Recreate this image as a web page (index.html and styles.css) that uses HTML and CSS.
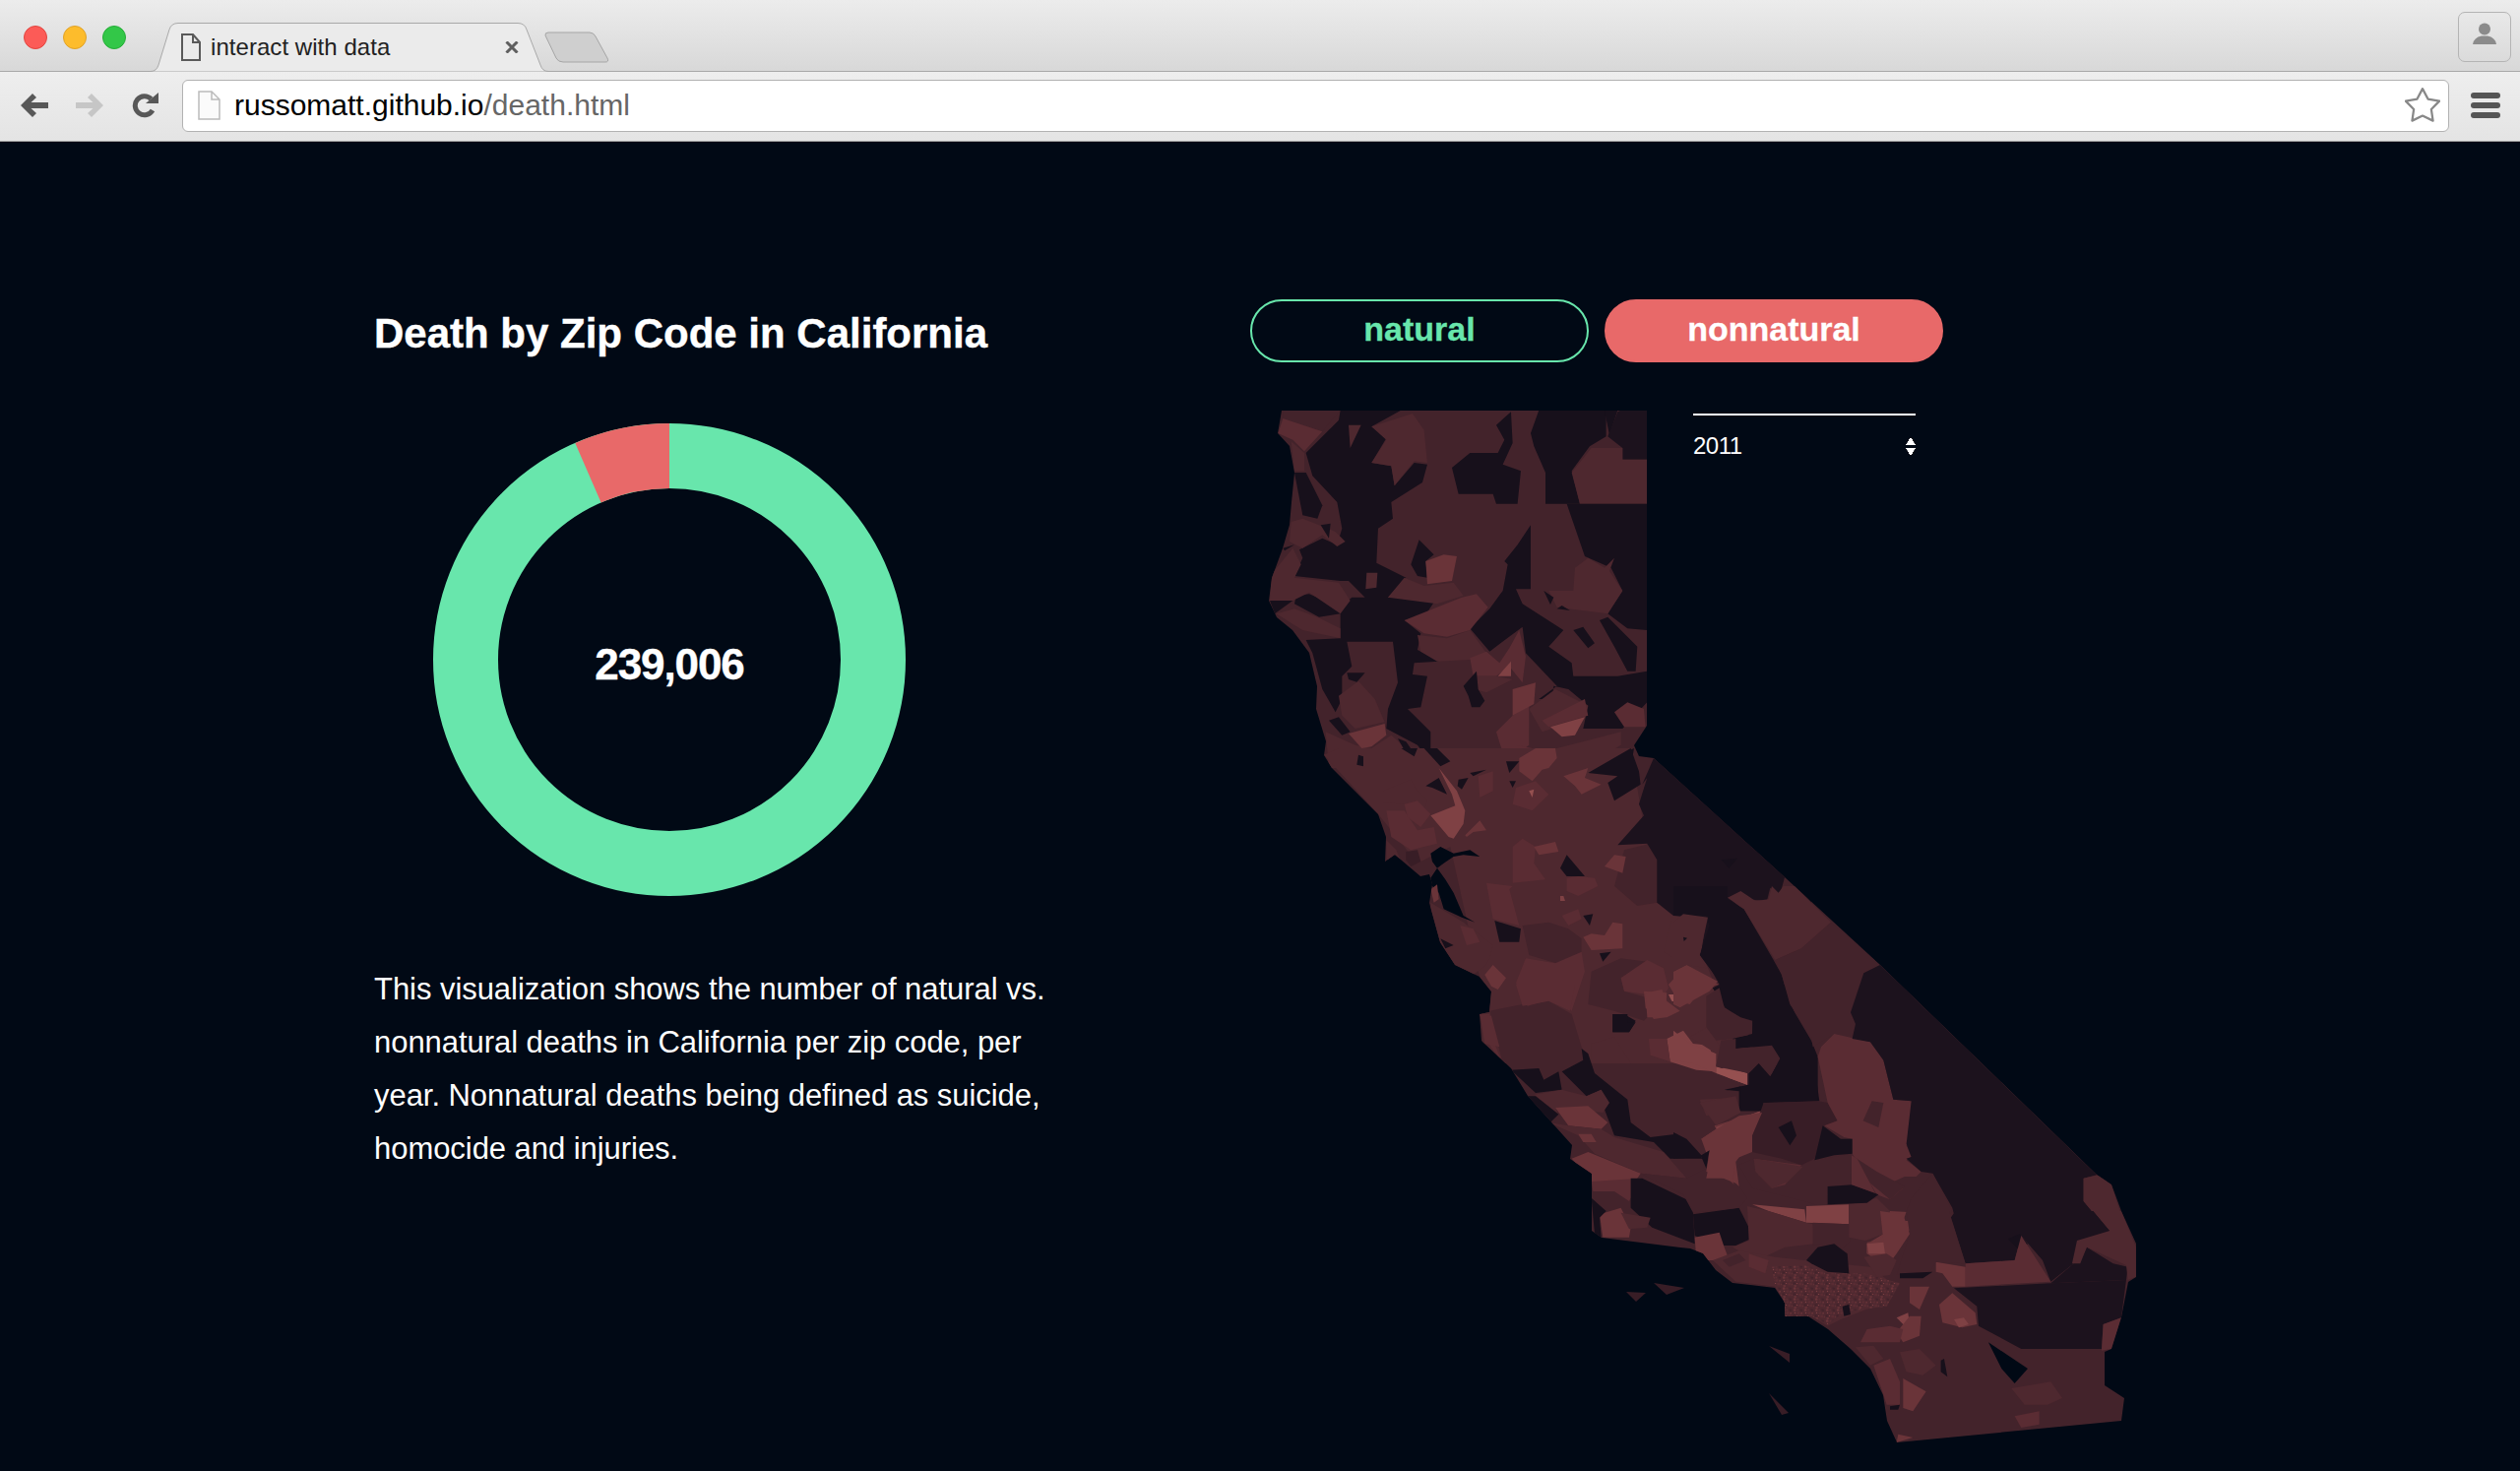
FILE: index.html
```html
<!DOCTYPE html>
<html lang="en">
  <head>
    <meta charset="UTF-8" />
    <meta name="viewport" content="width=device-width, initial-scale=1.0" />
    <title>interact with data</title>
    <link rel="stylesheet" href="styles.css">
  </head>
  <body>
    <header class="browser">
      <div class="tabstrip">
        <div class="lights">
          <span class="light red"></span>
          <span class="light yellow"></span>
          <span class="light green"></span>
        </div>
        <div class="tab">
          <svg class="tab-shape" viewBox="0 0 410 50" width="410" height="50">
            <path d="M0 49.5 H3 Q9 49.5 11 43 L22 7 Q24 0.5 31 0.5 H376 Q383 0.5 385 7 L399 43 Q401 49.5 407 49.5 H410 V50 H0 Z" />
          </svg>
          <svg class="doc-icon" viewBox="0 0 20 28" width="20" height="28">
            <path d="M1 1 H12 L19 9 V27 H1 Z M12 1 V9 H19" />
          </svg>
          <span class="tab-title">interact with data</span>
          <svg class="tab-close" viewBox="0 0 14 12" width="14" height="12">
            <path d="M1.5 0.5 L12.5 11.5 M12.5 0.5 L1.5 11.5" />
          </svg>
        </div>
        <svg class="new-tab" viewBox="0 0 66 32" width="66" height="32">
          <path d="M1 4 Q0.5 1 4 1 H46 Q50 1 52 5 L64 27 Q66 31 62 31 H19 Q14 31 12 27 Z" />
        </svg>
        <div class="profile">
          <svg viewBox="0 0 24 24" width="24" height="24">
            <circle cx="12" cy="6.5" r="6" />
            <path d="M0 22 Q1 15 9 13.5 H15 Q23 15 24 22 Z" />
          </svg>
        </div>
      </div>
      <div class="toolbar">
        <svg class="nav-back" viewBox="0 0 30 26" width="30" height="26">
          <path d="M13 1 L1 13 L13 25 L17 21 L11.5 16 H29 V10 H11.5 L17 5 Z" />
        </svg>
        <svg class="nav-forward" viewBox="0 0 30 26" width="30" height="26">
          <path d="M17 1 L29 13 L17 25 L13 21 L18.5 16 H1 V10 H18.5 L13 5 Z" />
        </svg>
        <svg class="nav-reload" viewBox="0 0 27 26" width="27" height="26">
          <path class="reload-arc" d="M21 18 A9.5 9.5 0 1 1 19.5 6.5" />
          <path class="reload-head" d="M14 11 H27 V0 Z" />
        </svg>
        <div class="omnibox">
          <svg class="page-icon" viewBox="0 0 23 30" width="23" height="30">
            <path d="M1 1 H14 L22 9 V29 H1 Z M14 1 V9 H22" />
          </svg>
          <span class="url">russomatt.github.io<span class="url-path">/death.html</span></span>
          <svg class="star" viewBox="2 1 32 32" width="36" height="36">
            <polygon points="18,2 22.9,11.3 33.2,13.1 25.9,20.6 27.4,30.9 18,26.4 8.6,30.9 10.1,20.6 2.8,13.1 13.1,11.3" />
          </svg>
        </div>
        <div class="menu">
          <span></span>
          <span></span>
          <span></span>
        </div>
      </div>
    </header>

    <main class="page">
      <section class="intro">
        <h1>Death by Zip Code in California</h1>
        <div class="ring">
          <svg viewBox="-240 -240 480 480" width="480" height="480">
            <circle class="ring-green" cx="0" cy="0" r="207" />
            <path class="ring-red" d="M0 -240 A240 240 0 0 0 -95.7 -220.1 L-69.4 -159.6 A174 174 0 0 1 0 -174 Z" />
          </svg>
          <span class="ring-total">239,006</span>
        </div>
        <p class="blurb">This visualization shows the number of natural vs.<br>nonnatural deaths in California per zip code, per<br>year. Nonnatural deaths being defined as suicide,<br>homocide and injuries.</p>
      </section>

      <section class="explore">
        <div class="toggles">
          <button class="toggle toggle-natural" type="button">natural</button>
          <button class="toggle toggle-nonnatural" type="button">nonnatural</button>
        </div>
        <div class="map-wrap">
          <svg class="map" viewBox="1280 410 900 1070" width="900" height="1070">
            <defs>
              <clipPath id="state">
                <polygon points="1302,417 1673,417 1673,737 1660,757 1665,768 1680,770 1823,900 1910,980 2130,1193 2145,1203 2155,1230 2170,1263 2170,1297 2162,1302 2155,1338 2145,1370 2138,1373 2138,1407 2158,1420 2155,1443 1927,1465 1917,1443 1913,1417 1900,1390 1880,1370 1857,1350 1837,1337 1813,1337 1813,1323 1803,1308 1760,1303 1743,1290 1730,1273 1717,1268 1707,1267 1627,1257 1617,1250 1617,1192 1595,1177 1597,1163 1552,1113 1535,1085 1505,1057 1503,1030 1513,1028 1515,1007 1503,992 1478,980 1463,957 1452,917 1455,898 1452,888 1443,890 1417,868 1407,875 1408,850 1400,827 1353,780 1345,767 1347,753 1337,720 1338,697 1330,663 1313,640 1297,627 1289,610 1292,587 1303,557 1310,533 1312,510 1315,480 1310,453 1298,440" />
              </clipPath>
              <pattern id="speck" width="60" height="60" patternUnits="userSpaceOnUse" patternTransform="scale(.55)">
                <rect class="c3" width="60" height="60" />
                <polygon class="c5" points="4,4 16,2 20,12 8,16" />
                <polygon class="c4" points="24,6 32,4 34,12 26,14" />
                <polygon class="c2" points="40,2 56,6 52,16 42,14" />
                <polygon class="c6" points="10,22 16,20 18,26 12,28" />
                <polygon class="c4" points="24,20 38,18 40,30 26,32" />
                <polygon class="c5" points="46,22 54,22 54,30 46,32" />
                <polygon class="c2" points="2,36 14,34 16,46 4,46" />
                <polygon class="c6" points="22,38 28,38 28,44 22,44" />
                <polygon class="c4" points="34,38 48,36 50,50 36,50" />
                <polygon class="c5" points="8,50 20,50 22,58 10,58" />
                <polygon class="c5" points="54,42 58,42 58,50 54,50" />
              </pattern>
            </defs>

            <g clip-path="url(#state)">
              <rect class="c2" x="1280" y="410" width="900" height="1070" />

              <!-- north -->
              <g transform="translate(1280 410) scale(.3333)">
                <polygon class="d" points="245,20 430,20 340,70 385,105 340,180 400,190 410,250 470,180 510,185 495,240 400,300 405,350 360,380 355,485 445,530 390,590 540,590 500,650 440,660 490,700 480,750 545,785 470,790 465,825 510,830 490,925 450,930 520,1000 520,1050 580,1090 540,1105 495,1060 480,1040 385,990 390,930 420,850 405,725 265,725 280,800 250,830 250,900 230,940 190,870 160,760 140,720 245,715 245,640 180,650 105,610 110,585 150,580 245,620 280,590 320,590 270,540 245,540 105,525 130,470 120,445 190,410 235,430 250,380 235,300 160,220 140,150 240,50" />
                <polygon class="d" points="105,210 140,210 190,310 175,350 130,340" />
                <polygon class="c2" points="70,20 245,20 190,85 70,45" />
                <polygon class="c4" points="70,45 190,85 135,145 100,110 55,90" />
                <polygon class="c3" points="95,115 135,150 135,205 105,205" />
                <polygon class="c3" points="340,180 385,110 340,70 465,30 500,80 510,180 470,175 410,250 400,190" />
                <polygon class="c3" points="270,65 308,65 275,135" />
                <polygon class="d" points="585,195 640,150 725,150 745,110 720,65 765,25 770,120 740,185 795,205 785,305 720,305 710,275 605,275" />
                <polygon class="d" points="825,90 850,20 1055,20 1055,100 1005,130 950,205 975,305 870,305 870,210 835,130" />
                <polygon class="d" points="1050,20 1090,20 1065,95" />
                <polygon class="e" points="1100,20 1180,20 1180,170 1105,170 1105,135 1060,100 1090,25" />
                <polygon class="c3" points="950,210 1010,135 1105,135 1105,170 1180,170 1180,305 975,305" />
                <polygon class="d" points="935,305 1180,305 1180,690 1120,685 1060,640 1105,570 1070,500 990,465" />
                <polygon class="c3" points="960,500 1000,470 1050,500 1080,470 1065,510 1105,570 1060,640 905,620 880,570 955,570" />
                <polygon class="d" points="745,480 785,430 825,370 825,565 780,565 800,610 925,690 880,740 950,790 955,830 1090,830 1180,815 1180,910 1105,990 985,990 1000,920 940,870 895,860 890,900 850,900 905,860 810,760 800,680 700,755 640,685 700,625 740,570 755,490" />
                <polygon class="d" points="865,570 895,590 885,612" />
                <polygon class="d" points="905,625 945,630 920,615" />
                <polygon class="d" points="955,690 985,680 1020,730 1000,745" />
                <polygon class="d" points="1035,660 1060,650 1150,740 1145,815 1120,815 1080,740" />
                <polygon class="d" points="485,415 530,460 505,480 510,530 480,525 460,490" />
                <polygon class="c5" points="505,480 560,460 600,465 585,540 510,550" />
                <polygon class="c3" points="500,555 590,545 620,585 540,610 390,590 440,530" />
                <polygon class="c3" points="480,705 570,715 640,690 690,760 640,780 540,785 490,755" />
                <polygon class="c4" points="440,660 615,590 660,580 695,620 640,690 570,710 500,700" />
                <polygon class="c4" points="640,775 690,755 730,790 760,745 790,690 810,770 800,850 760,800 720,830 650,830" />
                <polygon class="c6" points="725,830 765,785 765,830" />
                <polygon class="c3" points="650,830 720,830 770,840 690,880 655,870" />
                <polygon class="d" points="620,860 660,815 665,870 685,905 670,925 645,925 635,890" />
                <polygon class="c4" points="720,1000 770,950 820,920 820,1040 750,1095" />
                <polygon class="c5" points="770,870 840,850 835,915 770,950" />
                <polygon class="c3" points="820,930 900,870 1000,920 990,960 860,1000" />
                <polygon class="c4" points="860,965 990,900 1000,950 880,985" />
                <polygon class="c6" points="885,985 990,955 960,1010 920,1015" />
                <polygon class="c3" points="200,1000 290,1040 340,1050 400,1010 490,1090 400,1110 210,1110" />
                <polygon class="c5" points="270,1005 380,975 385,1010 340,1045 310,1050" />
                <polygon class="c3" points="240,890 300,845 350,900 380,970 290,990 250,950" />
                <polygon class="d" points="420,1020 445,1030 480,1080 445,1065" />
                <polygon class="d" points="290,1075 305,1068 322,1105 305,1105" />
                <polygon class="d" points="210,965 240,955 275,1000 250,1010" />
                <polygon class="d" points="265,820 320,820 295,848 270,840" />
                <polygon class="c3" points="325,515 358,515 355,560 322,565" />
                <polygon class="c3" points="30,600 35,520 100,440 125,490 105,530 240,545 275,600 245,640 150,575 100,600" />
                <polygon class="d" points="30,600 100,600 45,640" />
                <polygon class="d" points="70,440 105,430 75,448" />
                <polygon class="c3" points="95,360 130,350 180,370 230,390 260,420 235,435 190,400 130,440 90,420" />
                <polygon class="d" points="185,370 215,365 210,410" />
                <polygon class="c3" points="50,640 105,625 175,650 245,685 245,715 130,690 90,665" />
                <polygon class="c4" points="1080,940 1120,910 1170,930 1175,985 1110,985" />
                <polygon class="c5" points="800,1080 860,1060 855,1110 800,1110" />
                <polygon class="c4" points="780,1040 830,1050 800,1080 780,1070" />
                <polygon class="c3" points="905,1050 1100,1000 1100,1040 1000,1100 900,1110" />
                <polygon class="d" points="1000,1110 1100,1070 1140,1050 1130,1110" />
              </g>

              <!-- bay area and central valley -->
              <g transform="translate(1340 760) scale(.3333)">
                <polygon class="c3" points="15,20 60,0 950,0 1000,300 1030,470 1180,520 1165,620 1230,780 1340,960 500,960 490,700 400,300 300,350 180,200" />
                <polygon class="c2" points="620,540 700,530 760,550 800,580 800,620 740,660 640,630" />
                <polygon class="c2" points="520,800 620,780 700,770 770,810 800,910 820,960 560,960" />
                <polygon class="c2" points="900,420 930,310 1010,290 1030,340 1030,470 970,480" />
                <polygon class="c2" points="830,680 920,640 1000,650 920,700 930,740 1000,760 1030,790 990,830 900,800 820,780" />
                <polygon class="c3" points="195,130 280,95 300,130 330,160 320,190 260,170 195,165" />
                <polygon class="c4" points="205,190 260,190 300,250 350,240 360,290 280,310 220,270" />
                <polygon class="c4" points="260,170 300,160 340,200 310,240 270,210" />
                <polygon class="c3" points="205,280 235,310 250,345 205,340" />
                <polygon class="c1" points="265,315 300,310 310,345 280,360 265,340" />
                <polygon class="c6" points="365,60 420,130 445,190 440,230 410,275 395,270 340,205 415,175 405,140" />
                <polygon class="c5" points="445,265 490,220 510,250 470,255 450,270" />
                <polygon class="d" points="120,20 135,25 135,55 115,50" />
                <polygon class="d" points="345,120 325,115 365,90 390,140" />
                <polygon class="w" points="340,320 370,300 410,320 460,310 490,330 440,325 410,330 380,350 360,365 345,345" />
                <polygon class="w" points="340,395 360,365 385,400 410,440 440,510 475,530 435,515 380,490 365,440 340,415" />
                <polygon class="c5" points="340,430 360,415 365,460 350,470" />
                <polygon class="c3" points="340,470 390,500 440,530 530,600 520,640 510,660 470,690 420,670 370,600 340,510" />
                <polygon class="c4" points="430,540 470,550 490,590 450,600" />
                <polygon class="d" points="370,580 410,600 385,610" />
                <polygon class="c5" points="505,690 530,660 570,700 545,735 525,725" />
                <polygon class="c4" points="600,715 630,640 720,655 800,620 810,680 770,800 740,770 690,770 635,785" />
                <polygon class="c4" points="490,810 520,810 530,890 560,960 510,890" />
                <polygon class="c3" points="830,900 900,880 950,960 830,960" />
                <polygon class="c4" points="920,700 1000,645 1050,670 1065,730 1030,790 1000,750 930,740" />
                <polygon class="c5" points="990,740 1060,745 1055,820 1020,825 995,790" />
                <polygon class="c5" points="1065,720 1115,665 1120,680 1220,720 1170,730 1130,780 1095,770" />
                <polygon class="c3" points="1080,500 1110,510 1180,520 1160,620 1100,650 1050,620" />
                <polygon class="d" points="895,810 930,810 965,830 945,865 895,865" />
                <polygon class="d" points="855,625 890,620 865,650" />
                <polygon class="d" points="735,365 755,325 810,390 755,390" />
                <polygon class="d" points="535,525 615,550 610,590 550,590" />
                <polygon class="d" points="820,75 950,0 975,70 980,110 900,160 880,105 910,85" />
                <polygon class="c5" points="745,85 820,60 810,90 860,110 800,140 780,115" />
                <polygon class="c5" points="610,30 660,0 720,0 725,30 700,60 680,65 650,100 610,70" />
                <polygon class="c4" points="485,85 530,70 530,130 490,150" />
                <polygon class="d" points="425,95 455,90 435,125 422,115" />
                <polygon class="d" points="460,75 510,65 470,85" />
                <polygon class="d" points="570,40 610,40 580,75" />
                <polygon class="d" points="580,100 600,100 590,120" />
                <polygon class="d" points="320,0 360,0 400,40 370,55" />
                <polygon class="d" points="250,0 300,0 290,25" />
                <polygon class="c4" points="600,120 660,100 700,140 650,190 590,170" />
                <polygon class="c7" points="640,130 655,125 650,150" />
                <polygon class="c4" points="790,390 840,395 850,420 790,450 755,435 755,395" />
                <polygon class="c4" points="590,300 620,275 660,300 655,350 690,400 590,410" />
                <polygon class="c5" points="655,300 720,285 730,315 670,325" />
                <polygon class="c5" points="870,360 900,325 935,330 925,380" />
                <polygon class="c4" points="510,410 590,420 580,430 610,540 530,520" />
                <polygon class="c5" points="830,565 870,570 895,530 925,535 925,610 830,615 805,575" />
                <polygon class="c6" points="735,450 745,450 750,465 735,465" />
                <polygon class="c4" points="740,510 790,490 800,520 760,540" />
                <polygon class="d" points="805,510 835,505 825,540" />
                <polygon class="e" points="985,110 1020,30 1500,450 1500,470 1420,390 1405,445 1375,425 1365,465 1250,455 1290,490 1395,670 1500,960 1340,960 1300,850 1230,780 1200,730 1220,720 1165,620 1180,520 1080,510 1030,470 1030,340 1000,290 910,295 990,205 975,170 1000,90" />
                <polygon class="d" points="1225,340 1275,335 1250,365" />
              </g>

              <!-- central coast and tehachapi -->
              <g transform="translate(1480 1000) scale(.3333)">
                <polygon class="c4" points="180,0 360,0 345,80 280,50 200,65" />
                <polygon class="c4" points="70,90 105,95 130,190 85,180" />
                <polygon class="d" points="475,90 520,90 520,115 545,115 525,145 475,145" />
                <polygon class="c5" points="575,25 625,15 640,50 680,80 640,100 600,100 580,100" />
                <polygon class="c7" points="645,30 670,30 675,55 655,50" />
                <polygon class="c6" points="640,165 690,140 720,180 770,185 790,265 730,260 650,235" />
                <polygon class="c4" points="585,165 640,165 650,235 590,215" />
                <polygon class="c7" points="790,265 820,250 885,270 885,305 830,285" />
                <polygon class="d" points="165,260 250,255 265,290 310,265 320,320 240,330" />
                <polygon class="d" points="320,265 385,230 380,195 400,210 420,270 520,350 530,420 590,465 670,455 750,530 650,530 600,480 480,460 450,380 440,320 395,340" />
                <polygon class="c3" points="235,335 320,320 395,340 440,320 465,360 445,390 300,375 310,395" />
                <polygon class="d" points="215,340 240,340 310,395 285,420" />
                <polygon class="c5" points="300,375 400,370 460,420 440,440 340,430" />
                <polygon class="c3" points="280,420 340,430 440,440 480,465 630,510 700,590 560,575 420,515 370,460" />
                <polygon class="c5" points="370,455 410,455 425,480 385,480" />
                <polygon class="c5" points="350,530 400,510 560,575 550,590 540,600 525,610 530,650 410,600" />
                <polygon class="c4" points="410,600 560,590 525,660 480,630 415,630" />
                <polygon class="c5" points="435,700 500,680 530,740 525,770 445,770" />
                <polygon class="d" points="530,590 565,590 700,655 720,690 725,790 595,740 530,680" />
                <polygon class="d" points="720,700 860,680 905,770 850,795 800,795 725,765" />
                <polygon class="d" points="410,650 455,690 435,710 440,770 420,760" />
                <polygon class="c3" points="500,695 590,710 580,740 525,745" />
                <polygon class="c5" points="725,770 800,755 815,800 830,840 730,840" />
                <polygon class="c2" points="560,575 700,590 760,560 850,600 885,650 860,680 720,695 690,640" />
                <polygon class="c5" points="745,470 790,440 785,430 930,385 900,470 850,540 860,615 850,605 760,570 770,510" />
                <polygon class="c6" points="790,435 925,385 895,475 820,500" />
                <polygon class="d" points="780,10 840,0 1000,0 1030,90 1080,175 1105,355 930,360 930,385 860,385 860,325 815,320 890,305 890,270 920,235 960,275 985,225 940,185 845,195 840,160 905,155 905,105 865,75 810,60" />
                <polygon class="c3" points="740,350 850,345 860,380 760,400" />
                <polygon class="c2" points="860,550 905,530 1050,550 1085,535 1205,515 1200,610 1130,615 1125,680 1060,660 900,620" />
                <polygon class="c4" points="905,530 1050,550 1000,610 960,620 920,580" />
                <polygon class="c6" points="900,670 1060,685 1065,725 950,690" />
                <polygon class="c3" points="885,675 950,690 1065,725 1085,730 1090,790 1000,800 915,840 840,800 890,780" />
                <polygon class="c6" points="1065,675 1195,670 1195,730 1065,725" />
                <polygon class="c2" points="1085,725 1195,730 1200,780 1170,810 1120,790 1085,795" />
                <polygon class="c3" points="1195,670 1280,650 1320,690 1300,760 1245,780 1195,770" />
                <polygon class="c5" points="1320,690 1415,695 1380,750 1320,790 1250,790 1300,760" />
                <polygon class="c6" points="1250,790 1310,785 1305,820 1250,820" />
              </g>

              <!-- eastern sierra and desert -->
              <g transform="translate(1700 900) scale(.3333)">
                <polygon class="d" points="0,0 165,0 165,40 215,70 305,225 330,270 355,360 420,470 440,520 440,655 275,660 270,685 205,685 205,610 155,625 230,605 230,570 260,540 295,580 325,525 300,485 190,495 190,465 240,450 245,410 205,400 155,370 140,290 80,210 110,120 100,90 0,90" />
                <polygon class="c3" points="165,35 205,15 250,45 290,40 300,0 320,20 335,0 370,0 480,110 390,190 310,225 215,70" />
                <polygon class="c2" points="310,225 390,190 480,110 630,240 580,265 540,385 555,420 540,465 490,450 425,490 420,460 355,360 330,270" />
                <polygon class="c2" points="450,490 490,450 500,715 470,660 440,520" />
                <polygon class="c1" points="275,660 440,655 470,660 500,715 460,730 430,830 390,850 330,830 240,810 235,770" />
                <polygon class="c4" points="490,450 600,475 640,530 670,650 730,655 725,780 710,790 725,825 710,835 755,870 740,885 705,885 650,910 700,920 660,955 620,940 545,815 545,770 520,765 460,730 500,715 470,660 440,520 450,490" />
                <polygon class="c2" points="605,655 640,660 625,735 578,715" />
                <polygon class="e" points="580,265 630,240 1290,880 1250,890 1250,960 1300,1020 860,1020 850,980 790,875 755,870 710,830 725,825 710,785 725,655 670,650 640,530 600,475 545,465 555,420 540,385" />
                <polygon class="c3" points="1250,890 1295,880 1335,910 1370,1020 1300,1020 1250,960" />
                <polygon class="c2" points="725,950 790,875 850,990 820,1020 700,1020" />
                <polygon class="d" points="320,735 360,715 375,760 355,790" />
                <polygon class="d" points="430,835 455,730 510,770 545,770 545,815 490,820" />
                <polygon class="d" points="470,915 545,910 625,940 590,965 470,970" />
                <polygon class="c2" points="543,820 600,905 660,955 705,915 620,870" />
                <polygon class="c4" points="543,820 543,910 615,935 560,830" />
                <polygon class="c3" points="245,830 395,855 350,900 300,920 250,870" />
                <polygon class="c5" points="130,740 200,700 270,690 240,760 240,810 190,830 180,900 185,910 165,890 100,890 110,840 85,770" />
                <polygon class="d" points="0,750 40,770 85,820 110,805 100,860 85,825 0,830" />
                <polygon class="c6" points="0,440 50,480 130,510 130,570 60,540 0,530" />
                <polygon class="c7" points="130,550 225,580 225,605 130,570" />
                <polygon class="c3" points="50,460 110,425 140,490 130,510" />
                <polygon class="c2" points="145,470 190,465 190,495 300,485 325,525 295,580 260,540 230,570 130,550" />
                <polygon class="c2" points="100,335 140,310 155,370 205,400 240,410 240,450 180,465 130,470 100,430" />
                <polygon class="c5" points="0,260 40,240 135,290 110,320 20,370 0,360" />
                <polygon class="c3" points="0,110 30,85 105,95 80,210 100,250 40,240 0,260" />
                <polygon class="c3" points="80,660 190,640 205,690 130,730" />
                <polygon class="d" points="30,155 42,158 32,168" />
              </g>

              <!-- los angeles and san diego -->
              <g transform="translate(1700 1230) scale(.3333)">
                <polygon class="c3" points="120,150 200,120 310,140 400,150 600,170 680,230 640,280 510,330 470,350 420,320 340,320 335,270 310,230 190,215" />
                <polygon class="speck" points="300,170 400,165 470,190 580,190 690,220 650,290 570,300 520,310 470,345 420,320 340,320 335,270 310,230" />
                <polygon class="c4" points="230,130 290,150 280,190 230,170" />
                <polygon class="c2" points="150,150 200,130 220,150 170,170" />
                <polygon class="d" points="405,150 440,110 490,100 530,130 535,190 470,185 420,160" />
                <polygon class="e" points="845,20 860,0 1280,0 1330,60 1255,110 1220,160 1150,215 1125,150 1060,75 1040,150 890,160" />
                <polygon class="e" points="1220,160 1260,110 1340,160 1385,170 1380,210 1150,220" />
                <polygon class="e" points="855,235 1150,220 1380,210 1365,325 1310,345 1305,420 1060,420 930,350 925,290" />
                <polygon class="d" points="1020,85 1055,70 1080,100 1055,120" />
                <polygon class="c3" points="1280,0 1365,0 1410,110 1410,200 1385,210 1380,165 1260,110 1240,160 1215,160 1230,90 1330,60" />
                <polygon class="c4" points="1310,345 1365,325 1335,420 1305,425" />
                <polygon class="c4" points="890,160 1040,150 1060,75 1150,215 890,230" />
                <polygon class="c5" points="800,155 890,170 890,230 850,230 820,190 800,185" />
                <polygon class="c2" points="710,0 840,0 890,160 800,155 780,185 680,195 720,70" />
                <polygon class="d" points="690,190 790,185 760,205 690,205" />
                <polygon class="c5" points="630,0 700,10 720,70 680,130 650,170 590,130 590,95 640,90" />
                <polygon class="c6" points="590,100 640,95 645,130 595,130" />
                <polygon class="c3" points="580,140 650,130 680,150 660,195 620,200" />
                <polygon class="c5" points="810,285 850,250 920,310 925,345 880,355 820,340" />
                <polygon class="c6" points="855,330 885,325 900,345 870,355" />
                <polygon class="w" points="960,400 1080,480 1040,525 1000,480" />
                <polygon class="d" points="815,455 825,450 835,505 815,490" />
                <polygon class="c3" points="1030,540 1150,520 1185,570 1140,590 1070,590" />
                <polygon class="c4" points="1040,625 1115,610 1115,650 1060,660" />
                <polygon class="c3" points="690,430 750,420 800,470 760,500 710,490" />
                <polygon class="c3" points="555,415 610,410 640,450 600,470" />
                <polygon class="c4" points="610,470 660,450 690,520 690,590 650,590" />
                <polygon class="c5" points="700,510 770,550 730,610 700,600" />
                <polygon class="c5" points="685,680 730,690 680,705" />
                <polygon class="d" points="660,595 690,590 685,605 660,605" />
                <polygon class="d" points="515,290 535,285 540,315 520,320" />
                <polygon class="c6" points="680,325 715,310 720,345 700,345" />
                <polygon class="c5" points="720,320 755,320 750,380 700,400 680,370" />
                <polygon class="c5" points="720,230 780,230 750,300 720,280" />
                <polygon class="c4" points="590,360 660,350 700,360 690,400 640,400 570,400" />
              </g>
            </g>

            <!-- channel islands -->
            <polygon class="c1" points="1652,1312 1672,1313 1662,1322" />
            <polygon class="c1" points="1680,1303 1711,1308 1693,1315" />
            <polygon class="c1" points="1797,1367 1818,1375 1818,1384" />
            <polygon class="c1" points="1797,1415 1817,1435 1810,1437" />
          </svg>
          <div class="year-select">
            <span>2011</span>
            <span class="year-arrows"></span>
          </div>
        </div>
      </section>
    </main>
  </body>
</html>
```

FILE: styles.css
```css
body {
  font-family: "Liberation Sans", Arial, sans-serif;
  background-color: #010915;
  color: #fff;
  margin: 0;
  height: 100vh;
  overflow: hidden;
}

/* browser chrome */
.browser {
  height: 144px;
  color: #222;
}
.tabstrip {
  height: 73px;
  box-sizing: border-box;
  padding: 23px 9px 0 0;
  display: flex;
  align-items: flex-start;
  background: linear-gradient(#ececec, #d8d8d8);
  border-bottom: 1px solid #a9a9a9;
}
.lights {
  display: flex;
  gap: 16px;
  padding: 3px 0 0 24px;
  width: 126px;
}
.light {
  width: 24px;
  height: 24px;
  box-sizing: border-box;
  border-radius: 50%;
  border: 1px solid;
}
.red {
  background-color: #fc5b57;
  border-color: #e2453f;
}
.yellow {
  background-color: #fdbc2c;
  border-color: #e0a228;
}
.green {
  background-color: #33c748;
  border-color: #25ad37;
}
.tab {
  position: relative;
  width: 410px;
  height: 50px;
  display: flex;
  align-items: center;
  font-size: 24px;
}
.tab-shape {
  position: absolute;
  left: 0;
  top: 0;
}
.tab-shape path {
  fill: #ebebeb;
  stroke: #a9a9a9;
}
.doc-icon {
  position: relative;
  margin-left: 34px;
}
.doc-icon path {
  fill: none;
  stroke: #5a5a5a;
  stroke-width: 2;
}
.tab-title {
  position: relative;
  margin-left: 10px;
  width: 299px;
  letter-spacing: 0.05px;
}
.tab-close {
  position: relative;
}
.tab-close path {
  stroke: #5f5f5f;
  stroke-width: 3;
}
.new-tab {
  margin: 9px 0 0 -7px;
}
.new-tab path {
  fill: #cfcfcf;
  stroke: #a5a5a5;
}
.profile {
  margin: -11px 0 0 auto;
  width: 54px;
  height: 51px;
  box-sizing: border-box;
  border: 1px solid #b4b4b4;
  border-radius: 7px;
  display: flex;
  align-items: center;
  justify-content: center;
  padding-bottom: 5px;
}
.profile svg {
  fill: #8b8b8b;
}
.toolbar {
  height: 71px;
  box-sizing: border-box;
  padding: 8px 20px 10px 20px;
  display: flex;
  align-items: center;
  background: linear-gradient(#eeeeee, #e4e4e4);
  border-bottom: 1px solid #9c9c9c;
}
.nav-back {
  margin-right: 26px;
  fill: #585858;
}
.nav-forward {
  margin-right: 28px;
  fill: #c6c6c6;
}
.nav-reload {
  margin-right: 24px;
}
.reload-arc {
  fill: none;
  stroke: #585858;
  stroke-width: 5;
}
.reload-head {
  fill: #585858;
}
.omnibox {
  flex: 1;
  height: 53px;
  box-sizing: border-box;
  padding: 0 8px 0 15px;
  display: flex;
  align-items: center;
  background-color: #fff;
  border: 1px solid #b2b2b2;
  border-radius: 6px;
}
.page-icon path {
  fill: #fbfbfb;
  stroke: #bcbcbc;
  stroke-width: 1.5;
}
.url {
  margin-left: 14px;
  font-size: 30px;
  color: #000;
  flex: 1;
}
.url-path {
  color: #666;
}
.star polygon {
  fill: #fff;
  stroke: #888;
  stroke-width: 2;
  stroke-linejoin: round;
}
.menu {
  margin-left: 22px;
  width: 30px;
  display: flex;
  flex-direction: column;
  gap: 4px;
}
.menu span {
  height: 6px;
  border-radius: 3px;
  background-color: #555;
}

/* page */
.page {
  display: flex;
  padding: 160px 0 0 380px;
}
.intro {
  width: 890px;
}
h1 {
  margin: 10px 0 0;
  font-size: 42px;
  line-height: 50px;
  -webkit-text-stroke: 0.4px #fff;
}
.ring {
  margin: 66px 0 0 60px;
  width: 480px;
  height: 480px;
  display: grid;
  place-items: center;
}
.ring svg,
.ring-total {
  grid-area: 1 / 1;
}
.ring-green {
  fill: none;
  stroke: #68e6ac;
  stroke-width: 66;
}
.ring-red {
  fill: #e86969;
}
.ring-total {
  padding-top: 10px;
  font-size: 44px;
  font-weight: bold;
  letter-spacing: -1.1px;
  -webkit-text-stroke: 0.4px #fff;
}
.blurb {
  margin: 68px 0 0;
  font-size: 31px;
  line-height: 54px;
  white-space: nowrap;
  letter-spacing: -0.05px;
}
.toggles {
  display: flex;
  gap: 16px;
}
.toggle {
  width: 344px;
  height: 64px;
  box-sizing: border-box;
  padding: 0 0 4px;
  border-radius: 32px;
  border: 2px solid #68e6ac;
  background: none;
  font-family: inherit;
  font-size: 34px;
  font-weight: bold;
  -webkit-text-stroke: 0.3px;
  cursor: pointer;
}
.toggle-natural {
  color: #68e6ac;
}
.toggle-nonnatural {
  color: #fff;
  background-color: #e86969;
  border-color: #e86969;
}
.map-wrap {
  position: relative;
  margin: 42px 0 0 10px;
}
.map {
  display: block;
}
.d {
  fill: #17101b;
}
.e {
  fill: #1c121d;
}
.w {
  fill: #010915;
}
.c1 {
  fill: #381d26;
}
.c2 {
  fill: #43232b;
}
.c3 {
  fill: #4e282f;
}
.c4 {
  fill: #5a2c33;
}
.c5 {
  fill: #6a3439;
}
.c6 {
  fill: #7f4144;
}
.c7 {
  fill: #955050;
}
.speck {
  fill: url(#speck);
}
.year-select {
  position: absolute;
  left: 440px;
  top: 10px;
  width: 226px;
  padding-top: 17px;
  border-top: 2px solid #fff;
  display: flex;
  justify-content: space-between;
  align-items: center;
  font-size: 24px;
  letter-spacing: -0.5px;
  line-height: 28px;
}
.year-arrows {
  width: 10px;
  height: 19px;
  background:
    linear-gradient(to bottom right, transparent 49%, #fff 50%) left top / 5px 8px no-repeat,
    linear-gradient(to bottom left, transparent 49%, #fff 50%) right top / 5px 8px no-repeat,
    linear-gradient(to top right, transparent 49%, #fff 50%) left bottom / 5px 8px no-repeat,
    linear-gradient(to top left, transparent 49%, #fff 50%) right bottom / 5px 8px no-repeat;
}
```
